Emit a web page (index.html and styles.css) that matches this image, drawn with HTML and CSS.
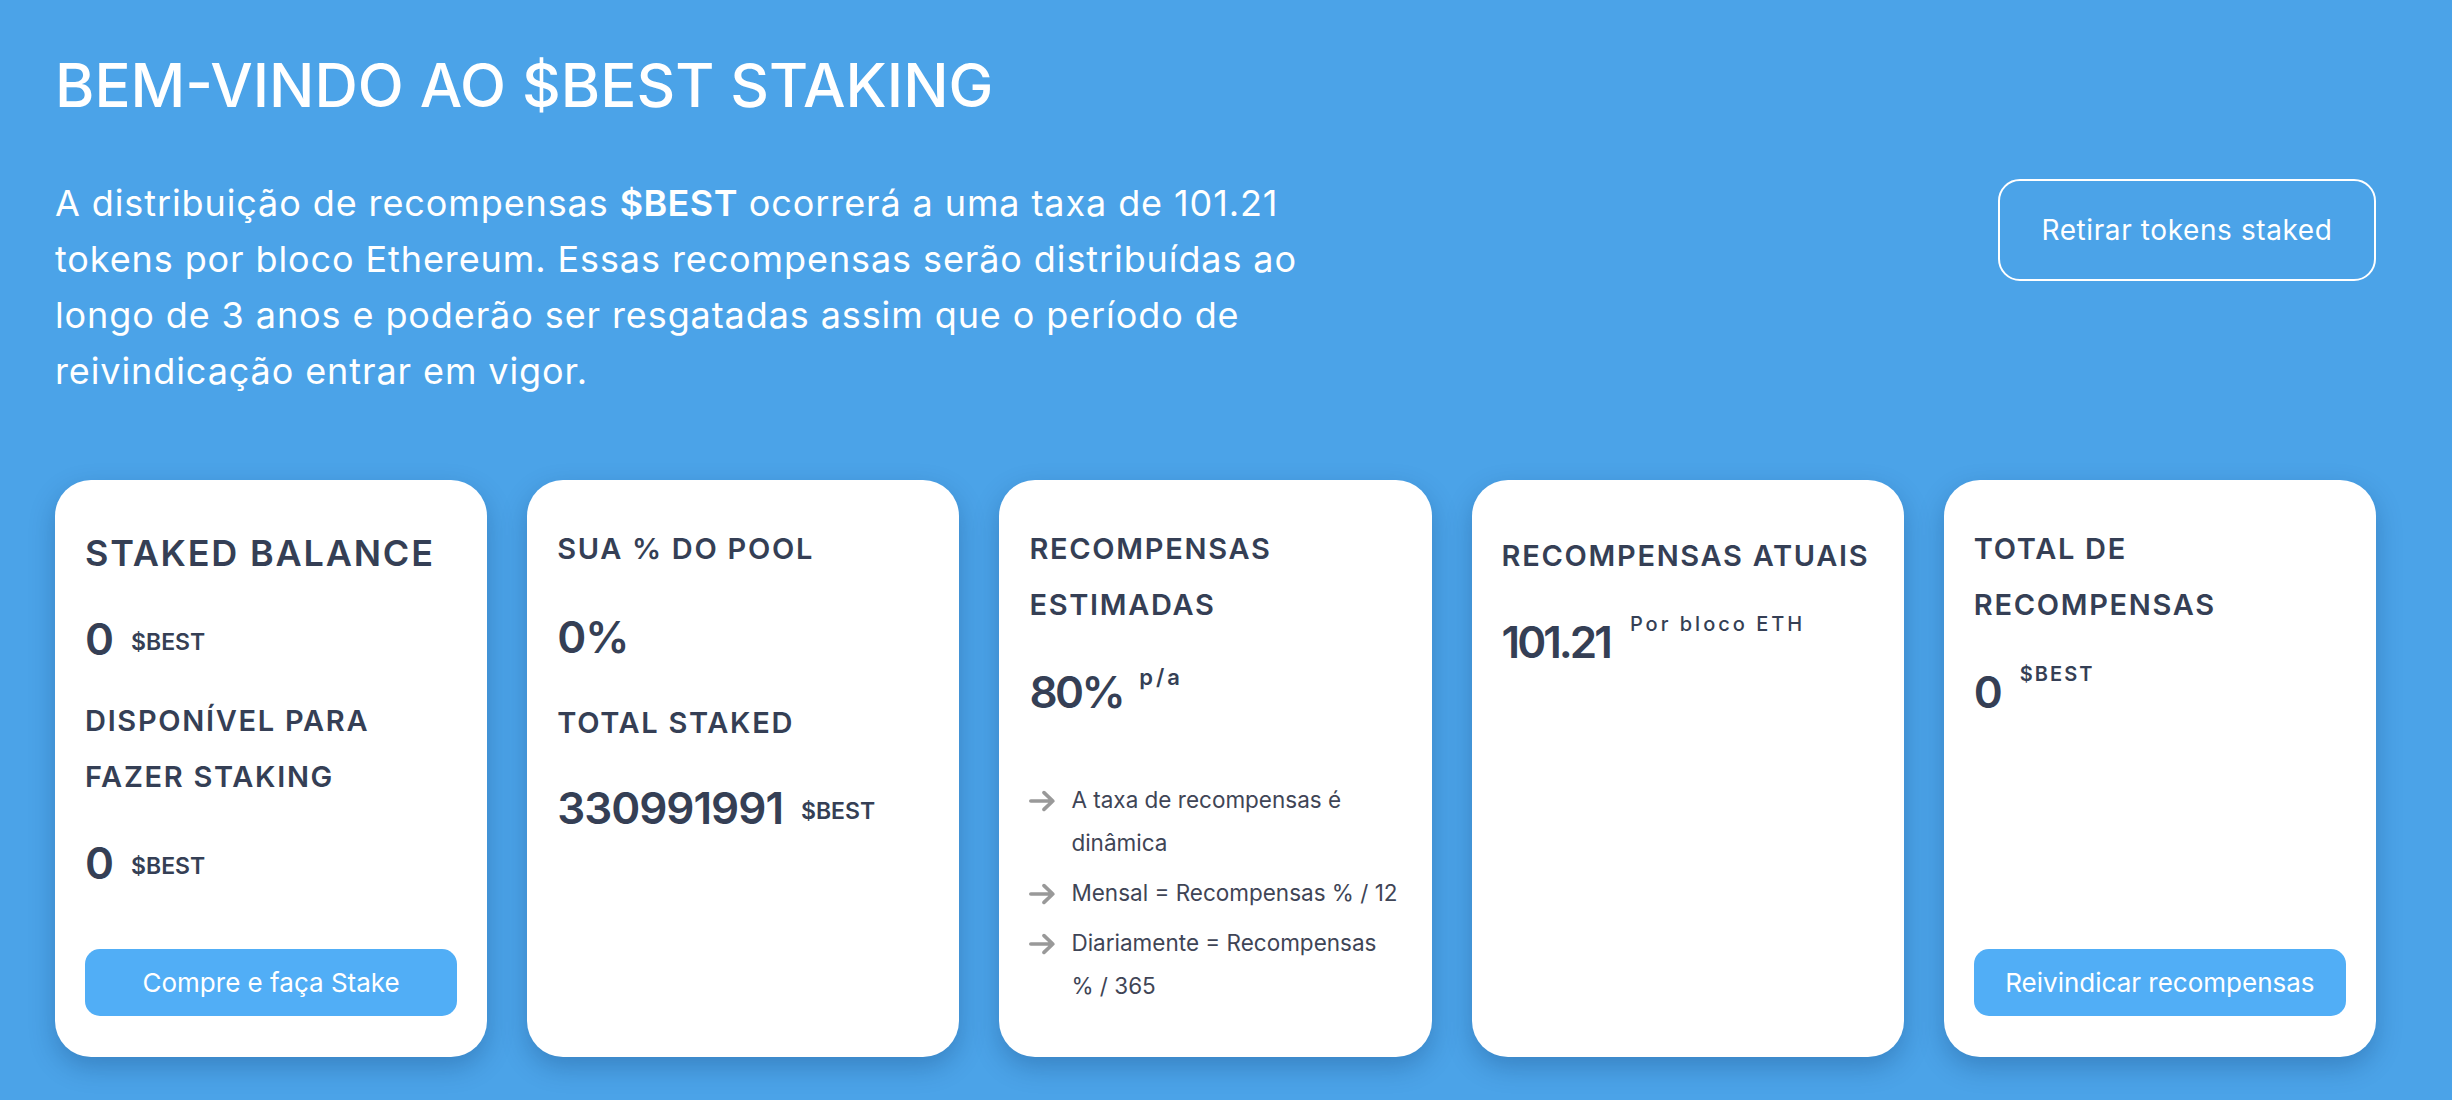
FILE: index.html
```html
<!DOCTYPE html>
<html lang="pt">
<head>
<meta charset="utf-8">
<title>$BEST Staking</title>
<link rel="stylesheet" href="styles.css">
</head>
<body>
<main class="page">
  <h1 class="title">BEM-VINDO AO $BEST STAKING</h1>
  <div class="intro">
    <p class="lead">A distribuição de recompensas <strong>$BEST</strong> ocorrerá a uma taxa de 101.21<br>tokens por bloco Ethereum. Essas recompensas serão distribuídas ao<br>longo de 3 anos e poderão ser resgatadas assim que o período de<br>reivindicação entrar em vigor.</p>
    <button class="btn-outline">Retirar tokens staked</button>
  </div>

  <section class="cards">
    <div class="card">
      <h2 class="label label-lg">STAKED BALANCE</h2>
      <div class="amount amount-first">
        <span class="num">0</span><span class="unit">$BEST</span>
      </div>
      <h2 class="label label-gap">DISPONÍVEL PARA<br>FAZER STAKING</h2>
      <div class="amount amount-second">
        <span class="num">0</span><span class="unit">$BEST</span>
      </div>
      <button class="btn-fill">Compre e faça Stake</button>
    </div>

    <div class="card">
      <h2 class="label">SUA % DO POOL</h2>
      <div class="amount amount-pool">
        <span class="num">0%</span>
      </div>
      <h2 class="label label-total">TOTAL STAKED</h2>
      <div class="amount amount-total">
        <span class="num">330991991</span><span class="unit">$BEST</span>
      </div>
    </div>

    <div class="card">
      <h2 class="label">RECOMPENSAS<br>ESTIMADAS</h2>
      <div class="amount amount-sup">
        <span class="num num-pct">80%</span><span class="sup sup-pa">p/a</span>
      </div>
      <ul class="notes">
        <li><svg class="arrow" viewBox="0 0 26 22" width="26" height="22"><path d="M1.8 11H23.8M15 2.6L23.8 11L15 19.4" fill="none" stroke="#999999" stroke-width="3.6" stroke-linecap="round" stroke-linejoin="round"/></svg><span>A taxa de recompensas é<br>dinâmica</span></li>
        <li><svg class="arrow" viewBox="0 0 26 22" width="26" height="22"><path d="M1.8 11H23.8M15 2.6L23.8 11L15 19.4" fill="none" stroke="#999999" stroke-width="3.6" stroke-linecap="round" stroke-linejoin="round"/></svg><span>Mensal = Recompensas % / 12</span></li>
        <li><svg class="arrow" viewBox="0 0 26 22" width="26" height="22"><path d="M1.8 11H23.8M15 2.6L23.8 11L15 19.4" fill="none" stroke="#999999" stroke-width="3.6" stroke-linecap="round" stroke-linejoin="round"/></svg><span>Diariamente = Recompensas<br>% / 365</span></li>
      </ul>
    </div>

    <div class="card">
      <h2 class="label label-atuais">RECOMPENSAS ATUAIS</h2>
      <div class="amount amount-rate">
        <span class="num num-tight">101.21</span><span class="sup sup-eth">Por bloco ETH</span>
      </div>
    </div>

    <div class="card">
      <h2 class="label">TOTAL DE<br>RECOMPENSAS</h2>
      <div class="amount amount-sup">
        <span class="num">0</span><span class="sup sup-best">$BEST</span>
      </div>
      <button class="btn-fill">Reivindicar recompensas</button>
    </div>
  </section>
</main>
</body>
</html>
```

FILE: styles.css
```css
* {
  box-sizing: border-box;
}

html, body {
  margin: 0;
  padding: 0;
}

body {
  background: #4ba3e8;
  font-family: Inter, "Noto Sans", "DejaVu Sans", sans-serif;
  color: #ffffff;
  height: 1100px;
  overflow: hidden;
}

.page {
  padding: 49px 76px 0 55px;
}

.title {
  margin: 0;
  font-size: 60px;
  line-height: 72px;
  font-weight: 500;
  letter-spacing: 0;
}

.intro {
  margin-top: 54px;
  display: flex;
  justify-content: space-between;
  align-items: flex-start;
}

.lead {
  margin: 0;
  font-size: 36px;
  line-height: 56px;
  font-weight: 400;
  letter-spacing: 0.9px;
  white-space: nowrap;
}

.lead strong {
  font-weight: 600;
  letter-spacing: 0.4px;
}

.btn-outline {
  margin-top: 4px;
  height: 102px;
  width: 378px;
  border: 2px solid #ffffff;
  border-radius: 22px;
  background: transparent;
  color: #ffffff;
  font-family: inherit;
  font-size: 28px;
  font-weight: 400;
  letter-spacing: 0.6px;
  padding: 0;
}

.cards {
  margin-top: 81px;
  display: grid;
  grid-template-columns: repeat(5, 1fr);
  gap: 40px;
}

.card {
  height: 577px;
  background: #ffffff;
  border-radius: 36px;
  padding: 41px 30px 41.5px 30px;
  display: flex;
  flex-direction: column;
  color: #353f55;
  box-shadow: 0 10px 26px rgba(10, 50, 100, 0.28);
}

.label {
  margin: 0;
  font-size: 29px;
  line-height: 56px;
  font-weight: 600;
  letter-spacing: 1.7px;
}

.label-lg {
  font-size: 36px;
  letter-spacing: 1.8px;
  margin-top: 4px;
}

.label-gap {
  margin-top: 32px;
}

.label-total {
  margin-top: 36px;
}

.label-atuais {
  margin-top: 7px;
}

.amount {
  display: flex;
  align-items: center;
}

.amount-first {
  margin-top: 36px;
}

.amount-second {
  margin-top: 36px;
}

.amount-pool {
  margin-top: 38px;
}

.amount-total {
  margin-top: 35px;
}

.amount-sup {
  margin-top: 37px;
  align-items: flex-start;
}

.amount-rate {
  margin-top: 36px;
  align-items: flex-start;
}

.num {
  font-size: 44px;
  line-height: 44px;
  font-weight: 600;
  letter-spacing: -1px;
}

.num-pct {
  letter-spacing: -2.5px;
}

.num-tight {
  letter-spacing: -3px;
}

.unit {
  font-size: 23px;
  line-height: 23px;
  font-weight: 600;
  margin-left: 18px;
  margin-top: 6px;
}

.sup {
  font-size: 20px;
  line-height: 20px;
  font-weight: 500;
}

.sup-pa {
  font-size: 22px;
  line-height: 22px;
  font-weight: 600;
  margin-left: 16px;
  margin-top: -4px;
  letter-spacing: 3px;
}

.sup-eth {
  margin-left: 20px;
  margin-top: -6px;
  letter-spacing: 3px;
}

.sup-best {
  margin-left: 18px;
  margin-top: -6px;
  letter-spacing: 2px;
  font-weight: 600;
}

.notes {
  list-style: none;
  margin: 64px -14px 0 0;
  padding: 0;
  font-size: 22.5px;
  line-height: 43px;
  color: #3f4556;
}

.notes li {
  display: flex;
  align-items: flex-start;
  margin-bottom: 7px;
}

.arrow {
  flex: none;
  margin-top: 12px;
  margin-right: 16px;
}

.btn-fill {
  margin-top: auto;
  height: 67px;
  width: 100%;
  border: none;
  border-radius: 15px;
  background: #51aef6;
  color: #ffffff;
  font-family: inherit;
  font-size: 26px;
  font-weight: 400;
  padding: 0;
}
```
